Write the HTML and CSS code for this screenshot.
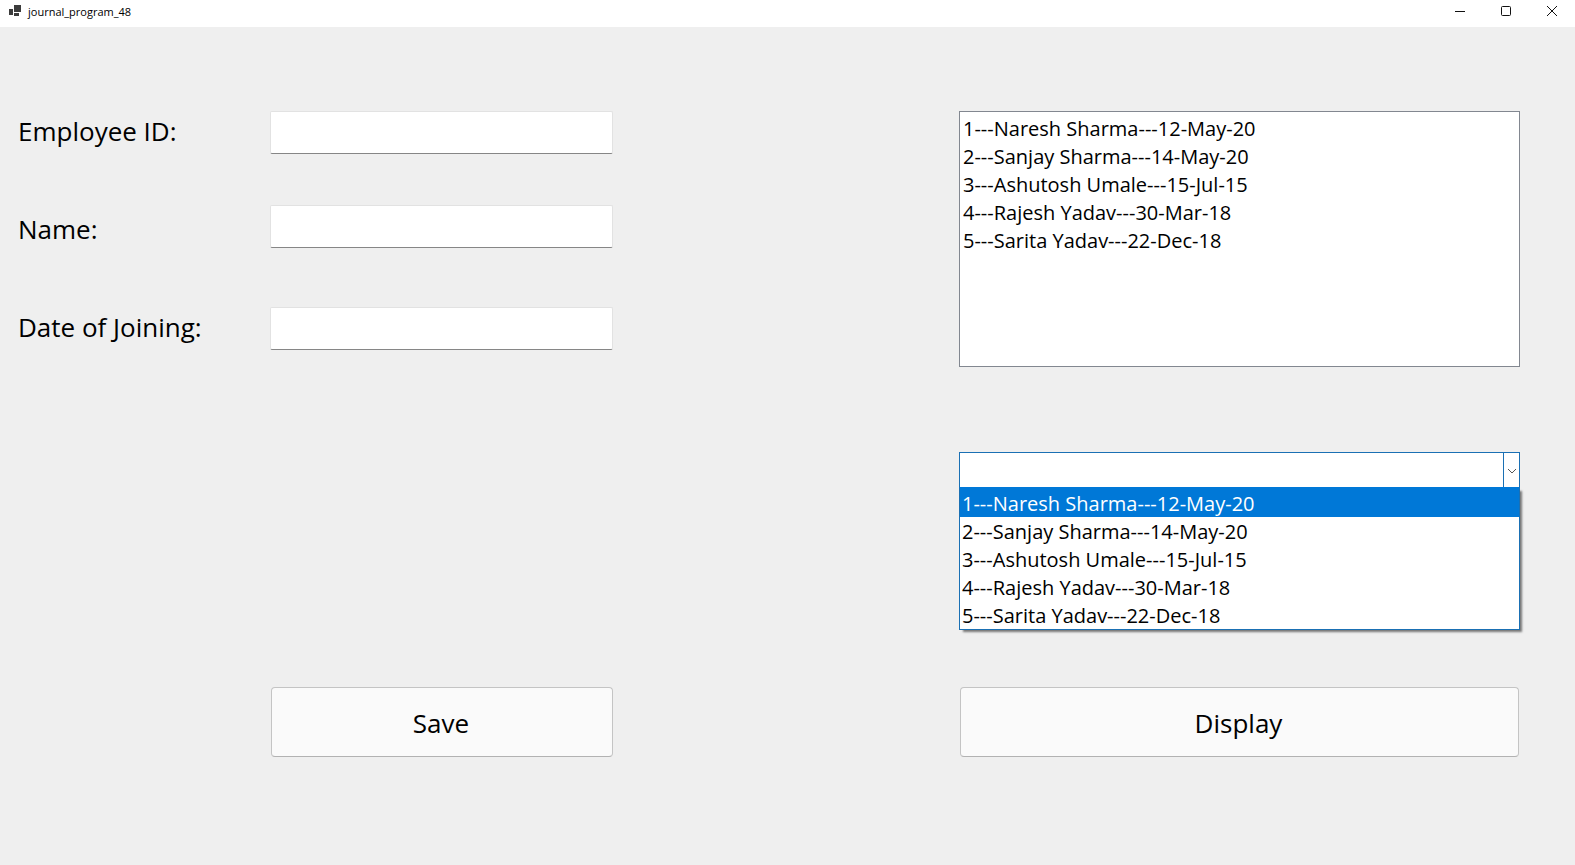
FILE: index.html
```html
<!DOCTYPE html>
<html lang="en">
<head>
<meta charset="utf-8">
<title>journal_program_48</title>
<link rel="stylesheet" href="styles.css">
</head>
<body>
<header class="titlebar">
  <svg class="app-icon" width="14" height="14" viewBox="0 0 14 14" aria-hidden="true">
    <path d="M0 5h4v6H0zM5 1h7v7H5zM5 9h5v3H5z" fill="#3c3c3c"/>
  </svg>
  <h1 class="title">journal_program_48</h1>
  <div class="window-buttons">
    <button class="window-button" type="button" aria-label="Minimize"><svg width="12" height="12" viewBox="0 0 12 12"><path d="M1 6.5h10"/></svg></button>
    <button class="window-button" type="button" aria-label="Maximize"><svg width="12" height="12" viewBox="0 0 12 12"><rect x="1.5" y="1.5" width="9" height="9" rx="1"/></svg></button>
    <button class="window-button" type="button" aria-label="Close"><svg width="12" height="12" viewBox="0 0 12 12"><path d="M1 1l10 10M11 1L1 11"/></svg></button>
  </div>
</header>
<main class="form">
  <div class="labels">
    <label class="label" for="employee-id">Employee ID:</label>
    <label class="label" for="name">Name:</label>
    <label class="label" for="joined">Date of Joining:</label>
  </div>
  <div class="fields">
    <input class="field" id="employee-id" type="text">
    <input class="field field-name" id="name" type="text">
    <input class="field field-date" id="joined" type="text">
  </div>
  <select class="listbox" size="9" aria-label="Employees">
    <option>1---Naresh Sharma---12-May-20</option>
    <option>2---Sanjay Sharma---14-May-20</option>
    <option>3---Ashutosh Umale---15-Jul-15</option>
    <option>4---Rajesh Yadav---30-Mar-18</option>
    <option>5---Sarita Yadav---22-Dec-18</option>
  </select>
  <div class="combo">
    <select class="combo-box" aria-label="Employee"><option></option></select>
    <span class="combo-arrow"><svg width="10" height="6" viewBox="0 0 10 6" aria-hidden="true"><path d="M1 1l4 4 4-4" fill="none" stroke="#555"/></svg></span>
    <ul class="menu" role="listbox" aria-label="Employee choices">
      <li class="item item-selected" role="option" aria-selected="true">1---Naresh Sharma---12-May-20</li>
      <li class="item" role="option">2---Sanjay Sharma---14-May-20</li>
      <li class="item" role="option">3---Ashutosh Umale---15-Jul-15</li>
      <li class="item" role="option">4---Rajesh Yadav---30-Mar-18</li>
      <li class="item" role="option">5---Sarita Yadav---22-Dec-18</li>
    </ul>
  </div>
  <button class="button save" type="button">Save</button>
  <button class="button display" type="button">Display</button>
</main>
</body>
</html>
```

FILE: styles.css
```css
* {
  box-sizing: border-box;
}

body {
  margin: 0;
  min-height: 100vh;
  background: #efefef;
  color: #000;
  font-family: "Open Sans", "Noto Sans", sans-serif;
}

.titlebar {
  display: flex;
  align-items: center;
  height: 27px;
  padding: 0 0 5px 9px;
  background: #fff;
}

.title {
  flex: 1;
  margin: 1px 0 0 5px;
  font-size: 11px;
  line-height: 16px;
  font-weight: 400;
}

.window-buttons {
  display: flex;
}

.window-button {
  display: flex;
  align-items: center;
  justify-content: center;
  width: 46px;
  height: 22px;
  padding: 0;
  border: 0;
  background: none;
}

.window-button svg {
  fill: none;
  stroke: #111;
}

.form {
  display: grid;
  grid-template-columns: 252fr 343fr 346fr 561fr;
  padding: 84px 55px 40px 18px;
}

.labels {
  display: flex;
  flex-direction: column;
  gap: 60px;
  padding-top: 1px;
  white-space: nowrap;
}

.label {
  font-size: 26px;
  line-height: 38px;
}

.fields {
  display: flex;
  flex-direction: column;
}

.field {
  width: 100%;
  height: 43px;
  padding: 0 4px;
  border: 1px solid #e2e2e2;
  border-bottom-color: #868686;
  border-radius: 2px;
  background: #fff;
  font: inherit;
  font-size: 26px;
}

.field-name {
  margin-top: 51px;
}

.field-date {
  margin-top: 59px;
}

.listbox {
  grid-column: 4;
  height: 256px;
  margin: 0;
  padding: 3px 0;
  border: 1px solid #828790;
  border-radius: 0;
  background: #fff;
  color: #000;
  font: inherit;
  font-size: 20px;
  appearance: none;
  overflow: hidden;
}

.listbox option {
  min-height: 28px;
  padding: 0 3px;
  line-height: 28px;
}

.combo {
  position: relative;
  grid-column: 4;
  height: 36px;
  margin-top: 85px;
}

.combo-box {
  width: 100%;
  height: 100%;
  border: 1px solid #1a70b4;
  border-radius: 0;
  background: #fff;
  font: inherit;
  font-size: 20px;
  appearance: none;
}

.combo-arrow {
  position: absolute;
  top: 0;
  right: 0;
  bottom: 0;
  display: flex;
  align-items: center;
  justify-content: center;
  width: 17px;
  padding-top: 2px;
  border: 1px solid #1a70b4;
  pointer-events: none;
}

.menu {
  position: absolute;
  top: 35px;
  left: 0;
  right: 0;
  height: 143px;
  margin: 0;
  padding: 0;
  border: 1px solid #1a70b4;
  border-top-color: #0078d7;
  background: #fff;
  box-shadow: 3px 3px 2px -1px #777;
  list-style: none;
  overflow: hidden;
}

.item {
  padding: 2px 2px 0;
  font-size: 20px;
  line-height: 26px;
}

.item-selected {
  padding-top: 3px;
  background: #0078d7;
  color: #fff;
}

.button {
  height: 70px;
  margin-top: 199px;
  padding: 1px 2px 0 0;
  border: 1px solid #c4c4c4;
  border-bottom-color: #b2b2b2;
  border-radius: 4px;
  background: #fafafa;
  color: #000;
  font: inherit;
  font-size: 26px;
}

.save {
  grid-column: 2;
  margin-left: 1px;
}

.display {
  grid-column: 4;
  margin-left: 1px;
  margin-right: 1px;
}
```
